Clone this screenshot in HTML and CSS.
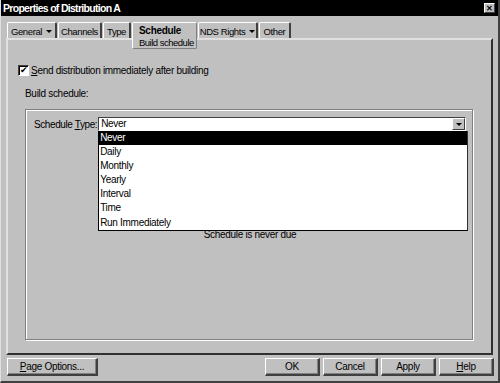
FILE: index.html
```html
<!DOCTYPE html>
<html lang="en">
<head>
    <meta charset="UTF-8">
    <title>Properties of Distribution A</title>
    <link rel="stylesheet" href="styles.css">
</head>
<body>
    <div class="window">
        <div class="titlebar">
            <span class="title">Properties of Distribution A</span>
            <span class="close">&#x2715;</span>
        </div>

        <div class="tabs">
            <div class="tab tab-general">General <span class="arrow"></span></div>
            <div class="tab tab-channels">Channels</div>
            <div class="tab tab-type">Type</div>
            <div class="tab selected">
                <b>Schedule</b>
                <span class="sub">Build schedule</span>
            </div>
            <div class="tab tab-nds">NDS Rights <span class="arrow"></span></div>
            <div class="tab tab-other">Other</div>
        </div>

        <div class="panel">
            <label class="check-row">
                <span class="checkbox">&#x2714;</span>
                <span><u>S</u>end distribution immediately after building</span>
            </label>

            <div class="section-label">Build schedule:</div>

            <div class="group">
                <div class="field-row">
                    <span class="field-label">Schedule <u>T</u>ype:</span>
                    <div class="combo">
                        <div class="combo-value">Never</div>
                        <div class="combo-btn"><span class="arrow"></span></div>
                        <ul class="combo-list">
                            <li class="picked">Never</li>
                            <li>Daily</li>
                            <li>Monthly</li>
                            <li>Yearly</li>
                            <li>Interval</li>
                            <li>Time</li>
                            <li>Run Immediately</li>
                        </ul>
                    </div>
                </div>
                <div class="status">Schedule is never due</div>
            </div>
        </div>

        <div class="footer">
            <button class="btn wide"><u>P</u>age Options...</button>
            <div class="btn-group">
                <button class="btn">OK</button>
                <button class="btn">Cancel</button>
                <button class="btn">Apply</button>
                <button class="btn"><u>H</u>elp</button>
            </div>
        </div>
    </div>
</body>
</html>
```

FILE: styles.css
```css
* {
    margin: 0;
    padding: 0;
    box-sizing: border-box;
}

body {
    width: 500px;
    height: 383px;
    overflow: hidden;
    background: #c0c0c0;
    font-family: 'Liberation Sans', Arial, sans-serif;
    font-size: 10px;
    letter-spacing: -0.3px;
    color: #000;
}

.window {
    width: 500px;
    height: 383px;
    background: #c0c0c0;
    border-left: 1px solid #dfdfdf;
    border-right: 2px solid #404040;
    border-bottom: 2px solid #404040;
    display: flex;
    flex-direction: column;
}

.titlebar {
    height: 16px;
    background: #000;
    color: #fff;
    display: flex;
    align-items: center;
    justify-content: space-between;
    padding: 0 3px 0 2px;
}

.title {
    font-weight: bold;
    font-size: 10.5px;
    letter-spacing: -0.7px;
}

.close {
    width: 11px;
    height: 10px;
    background: #c0c0c0;
    color: #000;
    font-size: 8px;
    font-weight: bold;
    line-height: 9px;
    letter-spacing: 0;
    text-align: center;
    border-top: 1px solid #fff;
    border-left: 1px solid #fff;
    border-right: 1px solid #404040;
    border-bottom: 1px solid #404040;
}

.tabs {
    display: flex;
    align-items: flex-start;
    height: 16px;
    margin-top: 6px;
    padding-left: 6px;
    gap: 1px;
}

.tab {
    height: 16px;
    padding-top: 1px;
    line-height: 13px;
    font-size: 9.5px;
    letter-spacing: -0.4px;
    border-top: 1px solid #fff;
    border-left: 1px solid #fff;
    border-right: 2px solid #404040;
    border-radius: 2px 2px 0 0;
    white-space: nowrap;
    display: flex;
    align-items: center;
    justify-content: center;
    gap: 4px;
}

.tab-general { width: 50px; }
.tab-channels { width: 44px; }
.tab-type { width: 28px; }
.tab-nds { width: 60px; }
.tab-other { width: 32px; }

.tab.selected {
    position: relative;
    z-index: 1;
    width: 65px;
    height: 27px;
    flex-direction: column;
    align-items: flex-start;
    justify-content: flex-start;
    gap: 0;
    padding: 2px 0 0 6px;
    background: #c0c0c0;
    border-right: 1px solid #808080;
    border-bottom: 1px solid #808080;
    border-radius: 2px;
    line-height: 12px;
    letter-spacing: -0.5px;
}

.tab.selected b {
    font-size: 10px;
    letter-spacing: -0.3px;
}

.arrow {
    display: inline-block;
    width: 0;
    height: 0;
    border-left: 3px solid transparent;
    border-right: 3px solid transparent;
    border-top: 3px solid #000;
}

.panel {
    margin: 0 5px 0 5px;
    height: 317px;
    border-top: 2px solid #e0e0e0;
    border-left: 2px solid #e0e0e0;
    border-right: 2px solid #303030;
    border-bottom: 2px solid #303030;
    padding: 24px 0 0 10px;
}

.check-row {
    display: flex;
    align-items: center;
    gap: 2px;
    height: 12px;
}

.checkbox {
    width: 11px;
    height: 11px;
    background: #fff;
    border-top: 1px solid #404040;
    border-left: 1px solid #404040;
    border-right: 1px solid #fff;
    border-bottom: 1px solid #fff;
    box-shadow: inset 1px 1px 0 #000;
    font-size: 9px;
    line-height: 9px;
    letter-spacing: 0;
    text-align: center;
}

.section-label {
    margin: 11px 0 0 7px;
    line-height: 13px;
}

.group {
    margin: 9px 18px 0 7px;
    height: 231px;
    border: 1px solid #808080;
    box-shadow: inset 1px 1px 0 #fff, 1px 1px 0 #fff;
    padding: 7px 6px 0 8px;
}

.field-row {
    display: flex;
    align-items: center;
}

.field-label {
    white-space: nowrap;
    letter-spacing: -0.4px;
    padding-right: 1px;
}

.combo {
    position: relative;
    flex: 1;
    height: 14px;
    background: #fff;
    border-top: 1px solid #404040;
    border-left: 1px solid #404040;
    border-right: 1px solid #fff;
    border-bottom: 1px solid #fff;
    display: flex;
}

.combo-value {
    flex: 1;
    padding-left: 2px;
    line-height: 12px;
}

.combo-btn {
    width: 13px;
    height: 12px;
    background: #c0c0c0;
    border-top: 1px solid #fff;
    border-left: 1px solid #fff;
    border-right: 1px solid #404040;
    border-bottom: 1px solid #404040;
    display: flex;
    align-items: center;
    justify-content: center;
}

.combo-list {
    position: absolute;
    top: 13px;
    left: -1px;
    right: -3px;
    height: 100px;
    list-style: none;
    background: #fff;
    border: 1px solid #000;
    border-top: none;
    border-right: 1px solid #303030;
    z-index: 2;
}

.combo-list li {
    height: 14.1px;
    line-height: 14px;
    padding-left: 1px;
}

.combo-list li.picked {
    background: #000;
    color: #fff;
}

.status {
    text-align: center;
    margin-top: 98px;
    line-height: 12px;
}

.footer {
    display: flex;
    justify-content: space-between;
    padding: 3px 4px 0 6px;
}

.btn-group {
    display: flex;
    gap: 3px;
}

.btn {
    width: 55px;
    height: 18px;
    background: #c0c0c0;
    font-family: 'Liberation Sans', Arial, sans-serif;
    font-size: 10px;
    letter-spacing: -0.3px;
    color: #000;
    border-top: 1px solid #fff;
    border-left: 1px solid #fff;
    border-right: 2px solid #404040;
    border-bottom: 2px solid #404040;
    box-shadow: inset -1px -1px 0 #808080;
}

.btn.wide {
    width: 91px;
}
```
